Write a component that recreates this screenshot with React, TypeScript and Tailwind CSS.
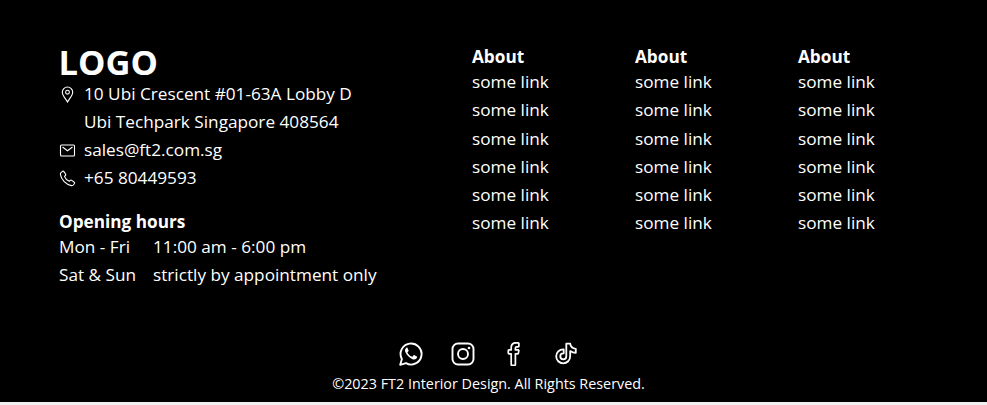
import type { ReactNode } from "react";

const links = ["some link", "some link", "some link", "some link", "some link", "some link"];

function Column() {
  return (
    <div className="w-[163px]">
      <h4 className="h-[23.15px] text-[17.2px] leading-6 font-bold">About</h4>
      <ul>
        {links.map((link, i) => (
          <li key={i} className="h-[28.2px] text-[17.2px] leading-[28px]">
            {link}
          </li>
        ))}
      </ul>
    </div>
  );
}

function Row({ icon, children }: { icon?: ReactNode; children: ReactNode }) {
  return (
    <div className="flex h-7 items-center text-[17.2px] leading-7">
      <span className="w-[25px]">{icon}</span>
      <span>{children}</span>
    </div>
  );
}

function PinIcon() {
  return (
    <svg className="size-[17px]" viewBox="0 0 17 17" fill="none" stroke="currentColor" strokeWidth="1.1">
      <path d="M8.5 16C7.2 13.4 3.3 9.6 3.3 6.2a5.2 5.2 0 0 1 10.4 0C13.7 9.6 9.8 13.4 8.5 16Z" />
      <circle cx="8.5" cy="6.2" r="1.9" />
    </svg>
  );
}

function MailIcon() {
  return (
    <svg className="mt-px size-[17px]" viewBox="0 0 17 17" fill="none" stroke="currentColor" strokeWidth="1.1">
      <rect x="1.5" y="3" width="14" height="11" rx="1" />
      <path d="m3.5 5 5 3.8 5-3.8" />
    </svg>
  );
}

function PhoneIcon() {
  return (
    <svg className="mt-px size-[17px]" viewBox="0 0 17 17" fill="none" stroke="currentColor" strokeWidth="1.1" strokeLinejoin="round">
      <path d="M2 2.7 3.6 1.3Q4.3.9 4.9 1.6L6.7 4.2Q7 4.9 6.4 5.5L5.5 6.4Q6.6 9.7 10.3 11.3L11.4 10.4Q12 9.9 12.7 10.4L15.3 12.2Q16 12.8 15.5 13.5L14.3 15Q13.6 15.8 12.5 15.6C7 14.7 2.2 9.7 1.4 4.4Q1.2 3.4 2 2.7Z" />
    </svg>
  );
}

function WhatsAppIcon() {
  return (
    <svg className="size-6" viewBox="0 0 24 24" fill="none" stroke="currentColor" strokeWidth="1.9">
      <path d="M1.2 22.8 2.9 17.1A10.5 10.5 0 1 1 7 21.2Z" strokeLinejoin="round" />
      <path
        d="M8.5 6.1c-.3-.6-.9-.6-1.3-.2-1.5 1.4-1.5 3.1-.5 4.9 1.5 2.8 3.8 5.2 6.8 6.4 1.8.7 4.1.1 4.5-1.7.2-.8 0-1-.5-1.3l-2-1c-.5-.2-.8-.1-1.1.3l-.8 1c-.3.3-.6.3-1 .1-1.8-.8-3-2-4-3.6-.2-.4-.1-.6.2-.9l.6-.8c.3-.4.3-.6.1-1Z"
        fill="currentColor"
        stroke="none"
      />
    </svg>
  );
}

function InstagramIcon() {
  return (
    <svg className="size-6" viewBox="0 0 24 24" fill="none" stroke="currentColor" strokeWidth="1.9">
      <rect x="1.5" y="1.5" width="21" height="21" rx="5.5" />
      <circle cx="12" cy="12" r="5" />
      <circle cx="18" cy="6" r="1.3" fill="currentColor" stroke="none" />
    </svg>
  );
}

function FacebookIcon() {
  return (
    <svg className="size-6" viewBox="0 0 24 24" fill="none" stroke="currentColor" strokeWidth="1.7" strokeLinejoin="round">
      <path d="M8.2 22.6V11.8H6a.7.7 0 0 1-.7-.7V8.6a.7.7 0 0 1 .7-.7h2.2V5.6C8.2 2.6 10 .9 12.8.9h2.4a.7.7 0 0 1 .7.7v2.5a.7.7 0 0 1-.7.7h-1.4c-1 0-1.4.4-1.4 1.3v1.8h2.8a.6.6 0 0 1 .6.8l-.4 2.5a.7.7 0 0 1-.7.6h-2.3v10.8a.7.7 0 0 1-.7.7H8.9a.7.7 0 0 1-.7-.7Z" />
    </svg>
  );
}

function TikTokIcon() {
  return (
    <svg className="size-6" viewBox="0 0 24 24" fill="none" stroke="currentColor" strokeWidth="1.8" strokeLinejoin="round">
      <path d="M11.3 1.7h3.9c.3 2.8 2.2 4.8 5.6 5.1v4c-2.1 0-4-.6-5.6-1.7v5.2a7 7 0 1 1-7-7h.5v4h-.5a3 3 0 1 0 3.1 3Z" />
    </svg>
  );
}

export default function App() {
  return (
    <div className="h-[405px] w-[987px] bg-[#f0f0f0] font-['Open_Sans',sans-serif] text-white">
      <footer className="flex h-[402px] flex-col bg-black">
        <div className="flex h-[342px] pt-[45px] pl-[59px]">
          <div className="w-[413px] whitespace-nowrap">
            <h1 className="-ml-[0.5px] h-[35px] text-[34.5px] leading-[34px] font-bold">LOGO</h1>
            <Row icon={<PinIcon />}>10 Ubi Crescent #01-63A Lobby D</Row>
            <Row>Ubi Techpark Singapore 408564</Row>
            <Row icon={<MailIcon />}>sales@ft2.com.sg</Row>
            <Row icon={<PhoneIcon />}>+65 80449593</Row>
            <h4 className="mt-[18px] h-[23px] text-[17.2px] leading-6 font-bold">Opening hours</h4>
            <div className="grid grid-cols-[94px_auto] text-[17.2px] leading-7">
              <span>Mon - Fri</span>
              <span>11:00 am - 6:00 pm</span>
              <span>Sat &amp; Sun</span>
              <span>strictly by appointment only</span>
            </div>
          </div>
          <Column />
          <Column />
          <Column />
        </div>
        <div className="flex flex-col items-center pr-[10px]">
          <div className="flex gap-7">
            <WhatsAppIcon />
            <InstagramIcon />
            <FacebookIcon />
            <TikTokIcon />
          </div>
          <p className="mt-2 text-[14.35px] leading-5">©2023 FT2 Interior Design. All Rights Reserved.</p>
        </div>
      </footer>
    </div>
  );
}
